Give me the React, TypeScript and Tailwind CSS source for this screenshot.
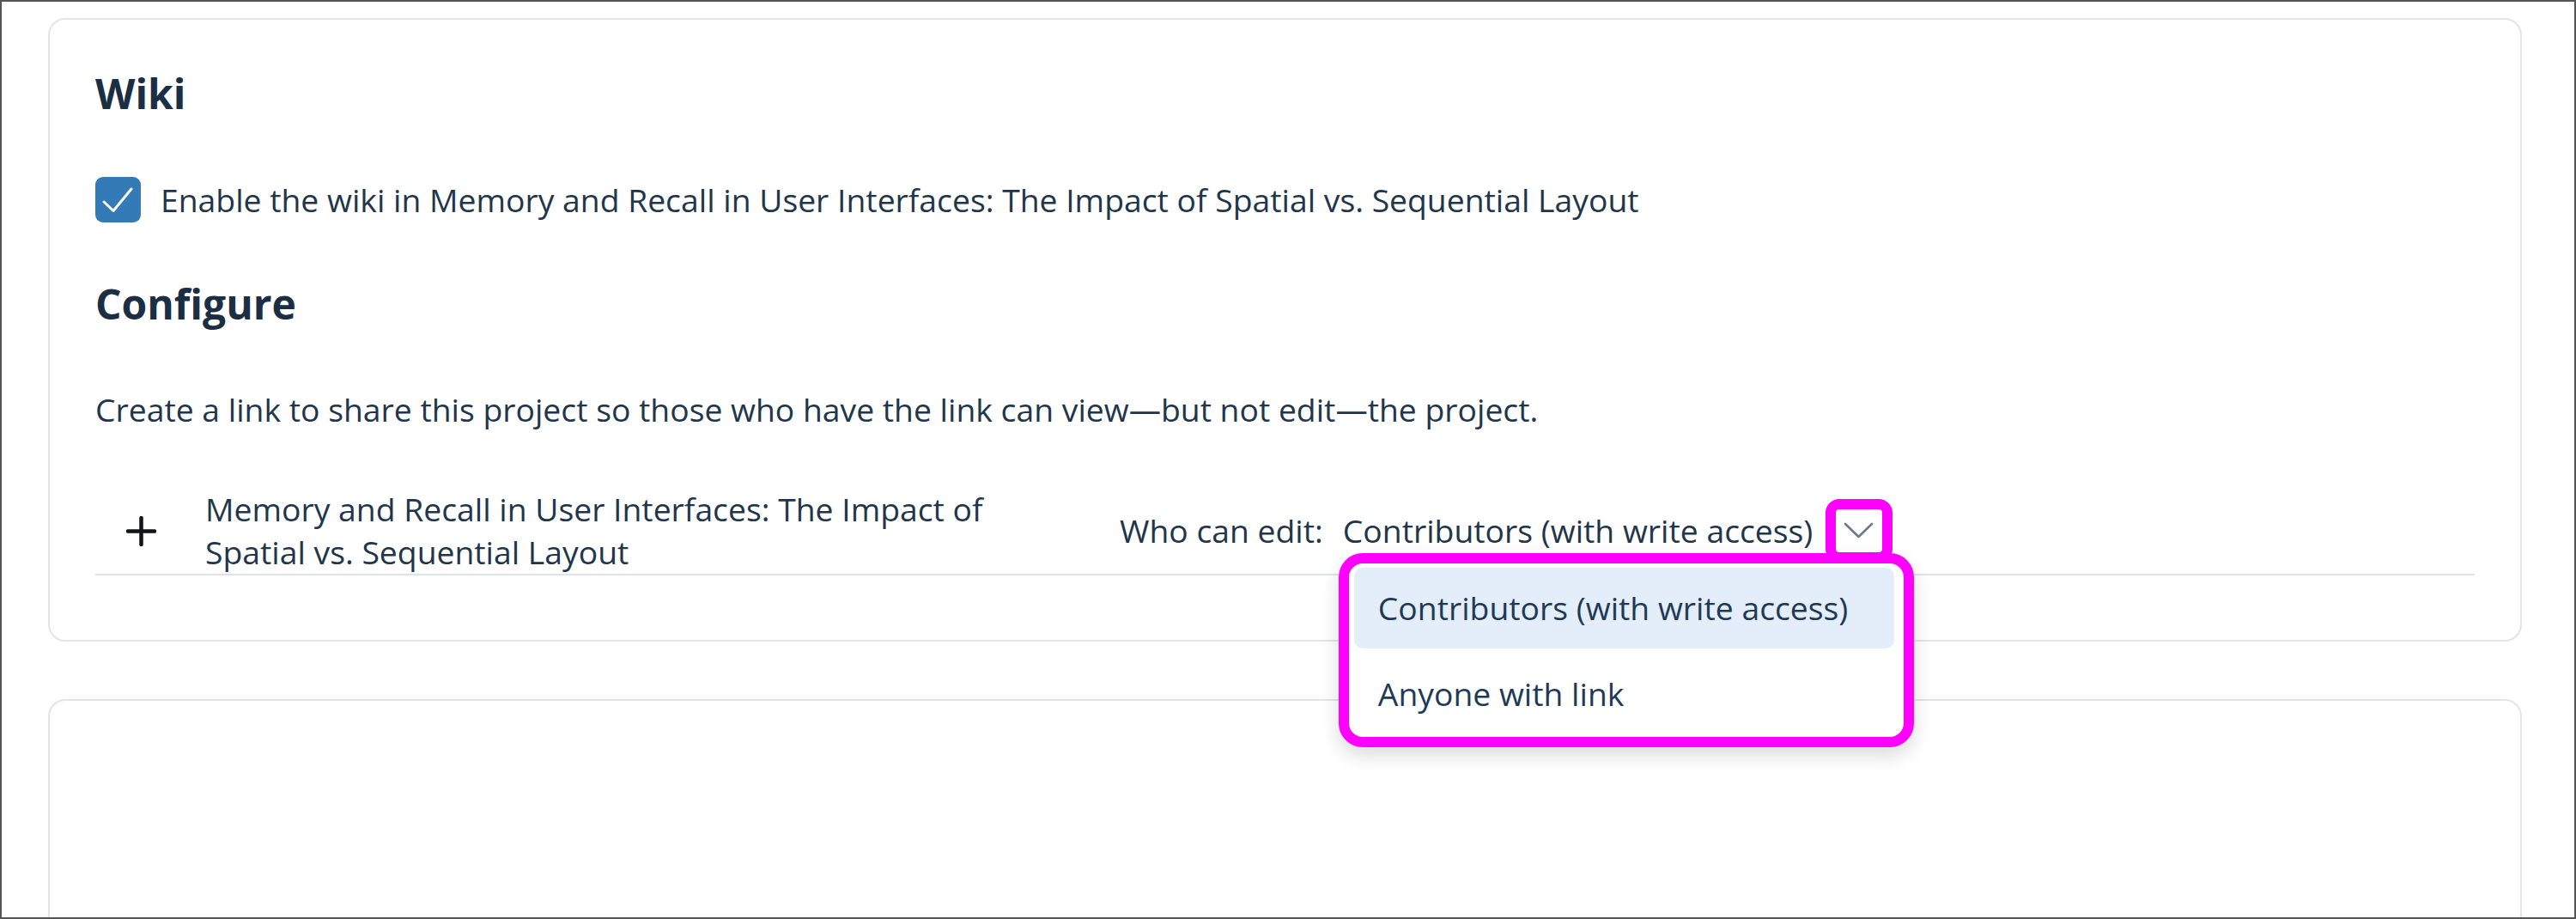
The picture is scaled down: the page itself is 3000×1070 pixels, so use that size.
import { useState } from 'react';

type Access = 'contributors' | 'anyone';

const ACCESS_LABELS: Record<Access, string> = {
  contributors: 'Contributors (with write access)',
  anyone: 'Anyone with link',
};

const PROJECT_TITLE = 'Memory and Recall in User Interfaces: The Impact of Spatial vs. Sequential Layout';

function CheckIcon() {
  return (
    <svg className="w-[53px] h-[53px]" viewBox="0 0 53 53" fill="none">
      <path d="M10 29 L21 39.5 L42 14" stroke="#ffffff" strokeWidth={3} strokeLinecap="round" strokeLinejoin="round" />
    </svg>
  );
}

function PlusIcon() {
  return (
    <svg className="w-[35px] h-[35px]" viewBox="0 0 35 35" fill="none">
      <path d="M17.5 2 V33 M2 17.5 H33" stroke="#111418" strokeWidth={4.5} strokeLinecap="round" />
    </svg>
  );
}

function ChevronIcon() {
  return (
    <svg className="w-[54px] h-[50px]" viewBox="0 0 54 50" fill="none">
      <path d="M11 17 L26.5 32 L42 17" stroke="#6b7a89" strokeWidth={2.6} strokeLinecap="round" strokeLinejoin="round" />
    </svg>
  );
}

export default function App() {
  const [enabled, setEnabled] = useState(true);
  const [access, setAccess] = useState<Access>('contributors');
  const [menuOpen, setMenuOpen] = useState(true);

  return (
    <div className="relative w-[3000px] h-[1070px] overflow-hidden bg-white border-2 border-[#555555] font-['Open_Sans',sans-serif] text-[#22364b]">
      {/* Wiki settings card */}
      <div className="ml-[54px] mt-[19px] w-[2881px] rounded-[20px] border-2 border-[#e4e4e4] bg-white pl-[53px] pr-[53px] pt-[57px] pb-[75px]">
        <h2 className="text-[48px] leading-[58px] font-bold text-[#1b2e43]">Wiki</h2>

        <label className="mt-[68px] flex items-center h-[53px] gap-[23px] cursor-pointer">
          <button
            onClick={() => setEnabled(!enabled)}
            className={`w-[53px] h-[53px] rounded-[9px] flex items-center justify-center ${enabled ? 'bg-[#337ab7]' : 'bg-white border-2 border-gray-300'}`}
          >
            {enabled && <CheckIcon />}
          </button>
          <span className="text-[37.3px] leading-[50px]">Enable the wiki in {PROJECT_TITLE}</span>
        </label>

        <h2 className="mt-[66px] text-[48px] leading-[58px] font-bold text-[#1b2e43]">Configure</h2>

        <p className="mt-[67px] text-[37.3px] leading-[54px]">
          Create a link to share this project so those who have the link can view—but not edit—the project.
        </p>

        {/* Project row */}
        <div className="mt-[64px] flex items-center border-b-2 border-[#dfe2e6]">
          <div className="w-[128px] pl-[36px] flex items-center">
            <PlusIcon />
          </div>
          <div className="w-[980px] text-[37.3px] leading-[50px]">{PROJECT_TITLE}</div>
          <div className="ml-[85px] flex items-center text-[37.3px] leading-[50px]">
            <span>Who can edit:</span>
            <div className="relative ml-[23px] flex items-center">
              <span>{ACCESS_LABELS[access]}</span>
              <button
                onClick={() => setMenuOpen(!menuOpen)}
                className="ml-[27px] w-[54px] h-[50px] rounded-[4px] bg-white outline-[12px] outline-solid outline-[#ff00ff]"
              >
                <ChevronIcon />
              </button>

              {menuOpen && (
                <div className="absolute left-[-5px] top-[51px] w-[670px] h-[226px] rounded-[28px] border-[12px] border-[#ff00ff] bg-white pl-[6px] pr-[11px] pt-[5px] shadow-[0_10px_22px_rgba(0,0,0,0.14)] z-10">
                  <div className="flex flex-col gap-[6px]">
                    {(['contributors', 'anyone'] as Access[]).map(a => (
                      <button
                        key={a}
                        onClick={() => { setAccess(a); setMenuOpen(false); }}
                        className={`h-[94px] rounded-[10px] pl-[28px] text-left text-[37.3px] leading-[94px] text-[#1f3a56] ${access === a ? 'bg-[#e3eefa]' : 'bg-white'}`}
                      >
                        {ACCESS_LABELS[a]}
                      </button>
                    ))}
                  </div>
                </div>
              )}
            </div>
          </div>
        </div>
      </div>

      {/* Next card */}
      <div className="ml-[54px] mt-[67px] w-[2881px] h-[400px] rounded-[20px] border-2 border-[#e4e4e4] bg-white" />
    </div>
  );
}
